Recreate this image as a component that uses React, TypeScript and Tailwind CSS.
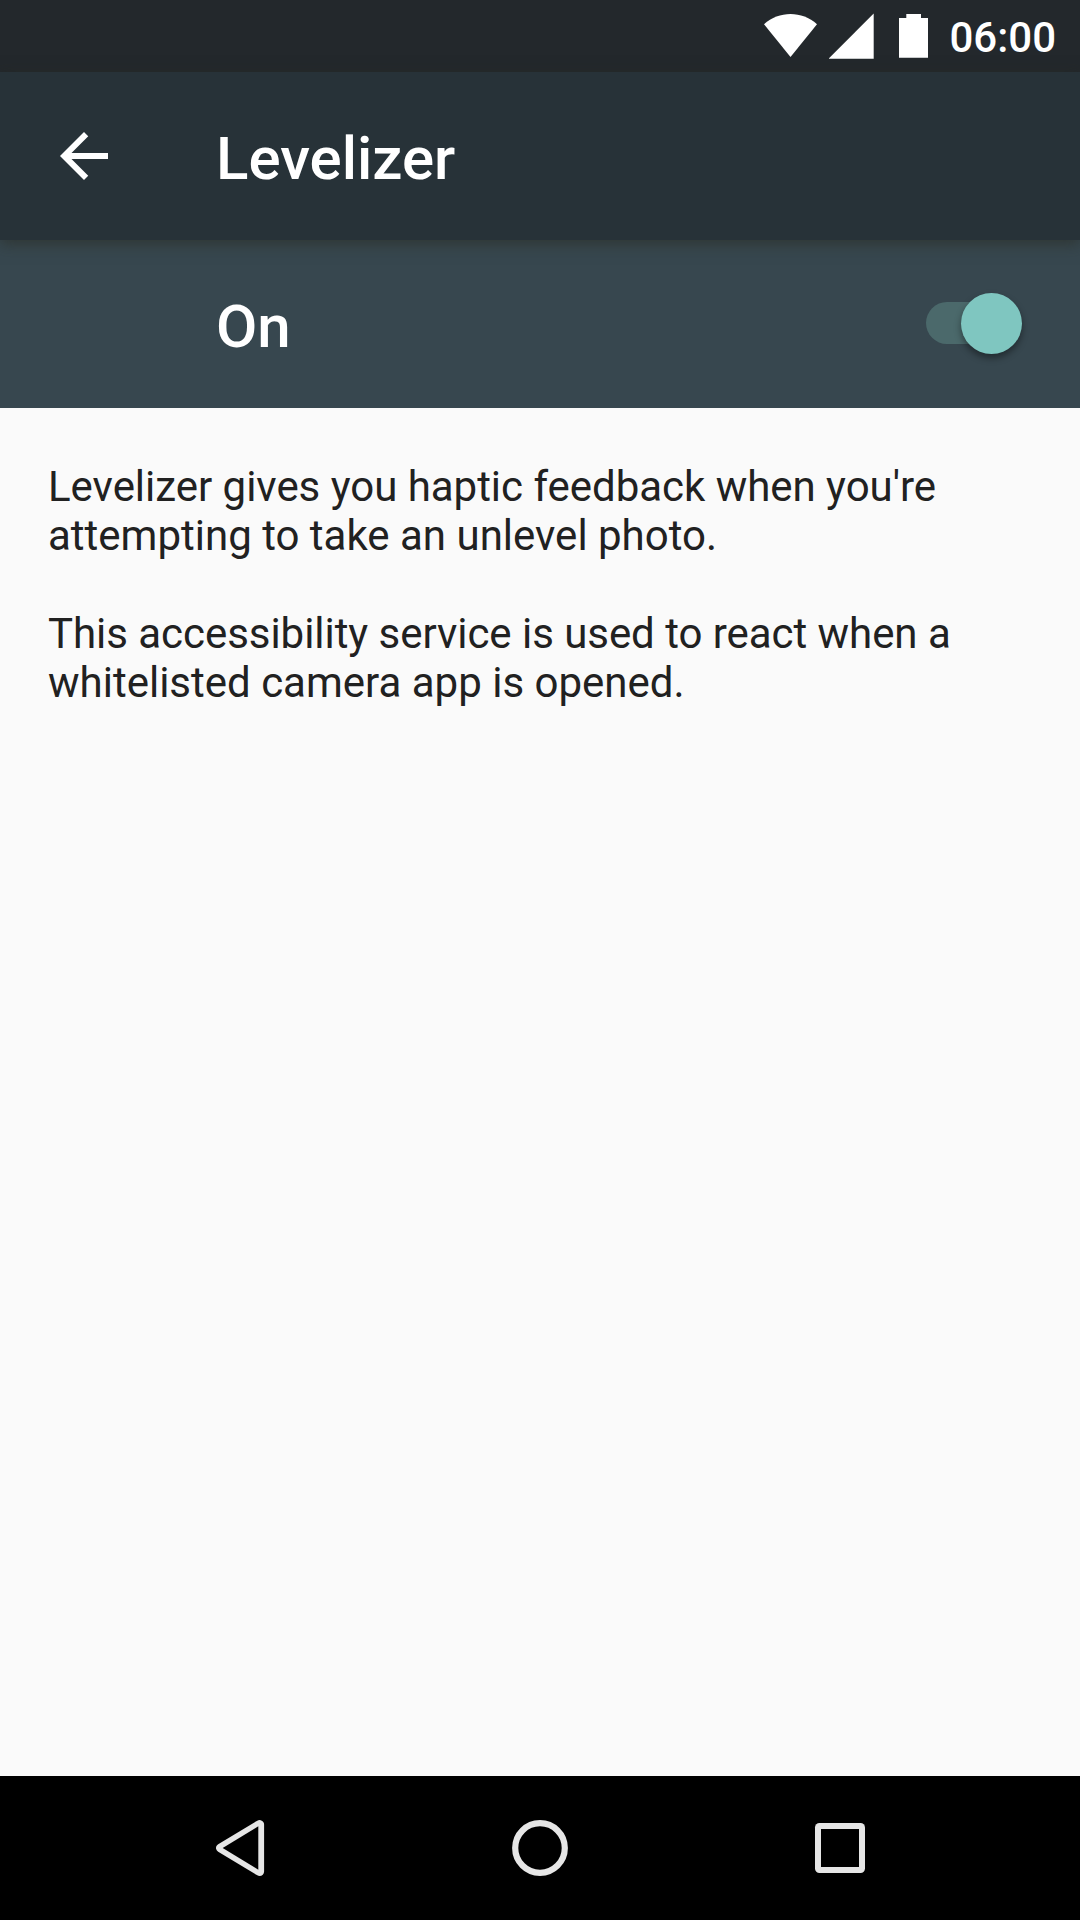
function StatusBar() {
  return (
    <header className="flex h-[72px] shrink-0 items-center justify-end bg-[#23282c] pr-6">
      <svg className="h-[72px] w-[54px]" viewBox="763 0 54 72" fill="#fff">
        <path d="M764 24.2C771.5 17.5 781 14 790.5 14S809.500 17.500 817 24.200L790.500 57Z" />
      </svg>
      <svg className="ml-3 h-[72px] w-[45px]" viewBox="829 0 45 72" fill="#fff">
        <path d="M828.500 58.700L873.700 13.500V58.700Z" />
      </svg>
      <svg className="ml-[25px] h-[72px] w-[29px]" viewBox="899 0 29 72" fill="#fff">
        <path d="M899 18H906.300V14H921V18H928V57.700H899Z" />
      </svg>
      <time className="mt-[4px] ml-[21px] text-[42px] leading-[48px] font-medium text-white">06:00</time>
    </header>
  );
}

function AppBar() {
  return (
    <div className="z-10 flex h-[168px] shrink-0 items-center bg-[#273238] pl-12 shadow-[0_4px_14px_rgba(40,40,30,0.55)]">
      <button aria-label="Back">
        <svg className="size-[72px]" viewBox="0 0 24 24" fill="#fff">
          <path d="M20 11H7.830l5.590-5.590L12 4l-8 8 8 8 1.410-1.410L7.830 13H20v-2z" />
        </svg>
      </button>
      <h1 className="ml-24 pt-[5px] text-[60px] leading-[70px] font-medium text-white">Levelizer</h1>
    </div>
  );
}

function SwitchBar() {
  return (
    <div className="flex h-[168px] shrink-0 items-center justify-between bg-[#37474f] pr-[58px] pl-[216px]">
      <span className="pt-[5px] text-[60px] leading-[70px] font-medium text-white">On</span>
      <button
        role="switch"
        aria-checked="true"
        aria-label="Levelizer"
        className="relative mb-[2px] h-[42px] w-[96px]"
      >
        <span className="block h-[42px] w-[84px] rounded-full bg-[#4b696b]" />
        <span className="absolute top-[-8.750px] left-[35.250px] size-[60.250px] rounded-full bg-[#7fc6c0] shadow-[0_4px_7px_rgba(0,0,0,0.4)]" />
      </button>
    </div>
  );
}

function NavigationBar() {
  return (
    <nav className="flex h-36 shrink-0 items-center justify-center gap-[200px] bg-black">
      <button aria-label="Back">
        <svg className="size-[100px]" viewBox="190 1798 100 100">
          <path d="M220.500 1848L259.600 1824.500V1871.500Z" fill="#e6e6e6" stroke="#e6e6e6" strokeWidth="9" strokeLinejoin="round" />
          <path d="M222.700 1848L258.300 1826.300V1869.700Z" fill="#000" />
        </svg>
      </button>
      <button aria-label="Home">
        <svg className="size-[100px]" viewBox="490 1798 100 100">
          <circle cx="540" cy="1848" r="24.800" fill="none" stroke="#e6e6e6" strokeWidth="6.200" />
        </svg>
      </button>
      <button aria-label="Recent apps">
        <svg className="size-[100px]" viewBox="790 1798 100 100">
          <rect x="815" y="1823" width="50" height="50" rx="4.500" fill="#e6e6e6" />
          <rect x="821" y="1829" width="38" height="38" fill="#000" />
        </svg>
      </button>
    </nav>
  );
}

export default function App() {
  return (
    <div className="flex h-[1920px] w-[1080px] flex-col overflow-hidden bg-[#fafafa] font-['Roboto',sans-serif]">
      <StatusBar />
      <AppBar />
      <SwitchBar />
      <main className="flex flex-1 flex-col gap-[49px] px-12 pt-[54px] text-[42px] leading-[49px] text-[#212121]">
        <p>
          <span className="tracking-[-0.025px]">Levelizer gives you haptic feedback when you're</span>
          <br />
          attempting to take an unlevel photo.
        </p>
        <p>
          <span className="tracking-[-0.045px]">This accessibility service is used to react when a</span>
          <br />
          whitelisted camera app is opened.
        </p>
      </main>
      <NavigationBar />
    </div>
  );
}
